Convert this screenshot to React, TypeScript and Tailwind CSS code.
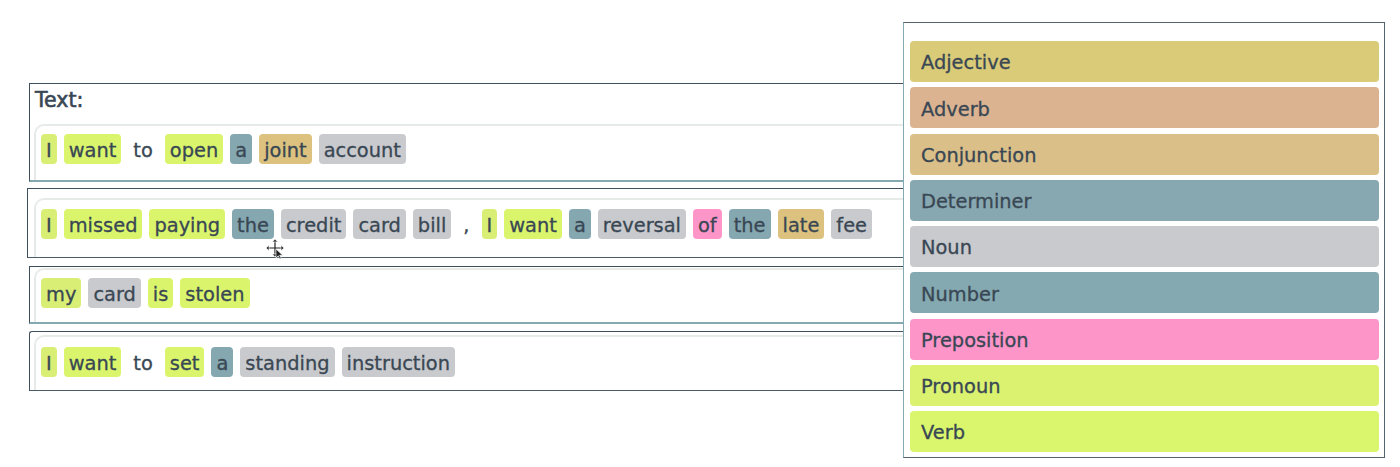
import React from "react";

type Tok = { t: string; c?: string };

const C = {
  verb: "bg-[#daf56c]",
  pron: "bg-[#d9ee74]",
  det: "bg-[#85a8b0]",
  adj: "bg-[#dcc27e]",
  noun: "bg-[#c9cacd]",
  prep: "bg-[#fd95c9]",
};

const rows: Tok[][] = [
  [
    { t: "I", c: C.pron },
    { t: "want", c: C.verb },
    { t: "to" },
    { t: "open", c: C.verb },
    { t: "a", c: C.det },
    { t: "joint", c: C.adj },
    { t: "account", c: C.noun },
  ],
  [
    { t: "I", c: C.pron },
    { t: "missed", c: C.verb },
    { t: "paying", c: C.verb },
    { t: "the", c: C.det },
    { t: "credit", c: C.noun },
    { t: "card", c: C.noun },
    { t: "bill", c: C.noun },
    { t: "," },
    { t: "I", c: C.pron },
    { t: "want", c: C.verb },
    { t: "a", c: C.det },
    { t: "reversal", c: C.noun },
    { t: "of", c: C.prep },
    { t: "the", c: C.det },
    { t: "late", c: C.adj },
    { t: "fee", c: C.noun },
  ],
  [
    { t: "my", c: C.pron },
    { t: "card", c: C.noun },
    { t: "is", c: C.verb },
    { t: "stolen", c: C.verb },
  ],
  [
    { t: "I", c: C.pron },
    { t: "want", c: C.verb },
    { t: "to" },
    { t: "set", c: C.verb },
    { t: "a", c: C.det },
    { t: "standing", c: C.noun },
    { t: "instruction", c: C.noun },
  ],
];

const legend: { name: string; c: string }[] = [
  { name: "Adjective", c: "bg-[#d9cb78]" },
  { name: "Adverb", c: "bg-[#dcb391]" },
  { name: "Conjunction", c: "bg-[#dbbf88]" },
  { name: "Determiner", c: "bg-[#88a8b1]" },
  { name: "Noun", c: "bg-[#c9cacd]" },
  { name: "Number", c: "bg-[#84a9b0]" },
  { name: "Preposition", c: "bg-[#fd95c9]" },
  { name: "Pronoun", c: "bg-[#daf270]" },
  { name: "Verb", c: "bg-[#daf66c]" },
];

function Chips({ toks }: { toks: Tok[] }) {
  return (
    <div className="flex gap-[7px]">
      {toks.map((k, i) => (
        <span
          key={i}
          className={`h-[30px] leading-[24px] pt-[5px] px-[5px] rounded-[4px] whitespace-nowrap ${k.c ?? ""}`}
        >
          {k.t}
        </span>
      ))}
    </div>
  );
}

function MoveCursor() {
  return (
    <svg
      className="absolute left-[265px] top-[238px]"
      width="22"
      height="22"
      viewBox="0 0 22 22"
    >
      <g stroke="#ffffff" strokeWidth="3" fill="none" strokeLinecap="round">
        <path d="M10 3v14M3 10h14" />
      </g>
      <g stroke="#222" strokeWidth="1.2" fill="none">
        <path d="M10 3v14M3 10h14" />
      </g>
      <g fill="#222" stroke="#fff" strokeWidth="0.6">
        <path d="M10 1l-2.5 3h5z" />
        <path d="M10 19l-2.5-3h5z" />
        <path d="M1 10l3-2.5v5z" />
        <path d="M19 10l-3-2.5v5z" />
        <path d="M11 11l0 9 2.2-2.2 1.6 3.2 1.4-0.7-1.6-3.1 3.1 0z" />
      </g>
    </svg>
  );
}

export default function App() {
  return (
    <div
      className="relative w-[1400px] h-[467px] bg-white text-[#394754] text-[19.4px] overflow-hidden [-webkit-text-stroke:0.3px_#394754]"
      style={{ fontFamily: '"DejaVu Sans", "Open Sans", sans-serif' }}
    >
      <div className="pt-[83px] pl-[29px] w-[1330px] flex flex-col">
        {/* Card 1 */}
        <div className="border-t border-l border-[#3f4f5b] border-b-2 border-b-[#84a9b0] pl-[4px] pt-[2px]">
          <div className="h-[38px] leading-[28px] pl-[1px] text-[20.5px] [-webkit-text-stroke:0.6px_#394754]">
            Text:
          </div>
          <div className="border-t-2 border-l-2 border-[#e7ebe8] rounded-tl-[10px] pt-[8px] pl-[5px] pb-[16px]">
            <Chips toks={rows[0]} />
          </div>
        </div>
        {/* Card 2 */}
        <div className="mt-[6px] -ml-[2px] border-t border-l border-[#3f4f5b] border-b border-b-[#4a5c66] pl-[6px] pt-[9px]">
          <div className="border-t-2 border-l-2 border-[#e7ebe8] rounded-tl-[10px] pt-[9px] pl-[5px] pb-[18px]">
            <Chips toks={rows[1]} />
          </div>
        </div>
        {/* Card 3 */}
        <div className="mt-[8px] border-t border-l border-[#3f4f5b] border-b-2 border-b-[#84a9b0] pl-[4px] pt-[1px]">
          <div className="border-t-2 border-l-2 border-[#e7ebe8] rounded-tl-[10px] pt-[8px] pl-[5px] pb-[14px]">
            <Chips toks={rows[2]} />
          </div>
        </div>
        {/* Card 4 */}
        <div className="mt-[7px] border-t border-l border-[#3f4f5b] border-b border-b-[#4a5c66] pl-[4px] pt-[3px] rounded-tl-[3px]">
          <div className="border-t-2 border-l-2 border-[#e7ebe8] rounded-tl-[10px] pt-[10px] pl-[5px] pb-[13px]">
            <Chips toks={rows[3]} />
          </div>
        </div>
      </div>

      <MoveCursor />

      {/* Legend dropdown */}
      <div className="absolute left-[903px] top-[22px] w-[482px] h-[436px] bg-white border border-[#55656f] border-l-[#84a9b0] pt-[18px] pl-[6px] pr-[5px] flex flex-col gap-[5.25px]">
        {legend.map((l) => (
          <div
            key={l.name}
            className={`h-[41px] shrink-0 rounded-[4px] pl-[11px] pt-[3px] flex items-center ${l.c}`}
          >
            {l.name}
          </div>
        ))}
      </div>
    </div>
  );
}
